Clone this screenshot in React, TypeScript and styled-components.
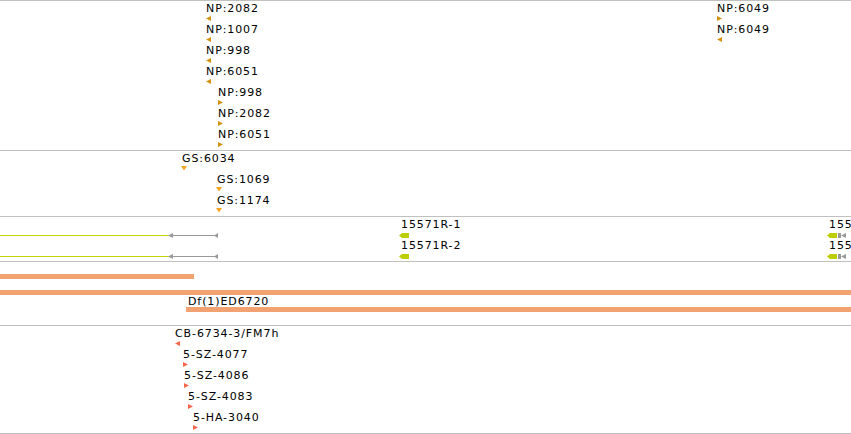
import styled, { createGlobalStyle } from 'styled-components';

const RULE = '#c0c0c0';

const GlobalStyle = createGlobalStyle`
  html, body {
    margin: 0;
    padding: 0;
    background: #fff;
  }
  body {
    font-family: "DejaVu Sans", Verdana, sans-serif;
  }
`;

type Strand = 'left' | 'right' | 'down';

interface Feat {
  x: number;
  label: string;
  strand: Strand;
}

const npRows: Feat[][] = [
  [
    { x: 206, label: 'NP:2082', strand: 'left' },
    { x: 717, label: 'NP:6049', strand: 'right' },
  ],
  [
    { x: 206, label: 'NP:1007', strand: 'left' },
    { x: 717, label: 'NP:6049', strand: 'left' },
  ],
  [{ x: 206, label: 'NP:998', strand: 'left' }],
  [{ x: 206, label: 'NP:6051', strand: 'left' }],
  [{ x: 218, label: 'NP:998', strand: 'right' }],
  [{ x: 218, label: 'NP:2082', strand: 'right' }],
  [{ x: 218, label: 'NP:6051', strand: 'right' }],
];

const gsRows: Feat[][] = [
  [{ x: 182, label: 'GS:6034', strand: 'down' }],
  [{ x: 217, label: 'GS:1069', strand: 'down' }],
  [{ x: 217, label: 'GS:1174', strand: 'down' }],
];

const stockRows: Feat[][] = [
  [{ x: 175, label: 'CB-6734-3/FM7h', strand: 'left' }],
  [{ x: 183, label: '5-SZ-4077', strand: 'right' }],
  [{ x: 184, label: '5-SZ-4086', strand: 'right' }],
  [{ x: 188, label: '5-SZ-4083', strand: 'right' }],
  [{ x: 193, label: '5-HA-3040', strand: 'right' }],
];

const transcripts = [
  { label: '15571R-1', lineColor: '#c4d400' },
  { label: '15571R-2', lineColor: '#c4d400' },
];

const deficiencies = [
  { x: 0, width: 194, label: '' },
  { x: 0, width: 851, label: '' },
  { x: 186, width: 665, label: 'Df(1)ED6720' },
];

const Browser = styled.div`
  width: 851px;
  height: 434px;
  overflow: hidden;
  border-top: 1px solid ${RULE};
  box-sizing: border-box;
  display: flex;
  flex-direction: column;
`;

const Track = styled.section<{ $height: number; $padTop?: number }>`
  position: relative;
  flex: none;
  height: ${(p) => p.$height + 1}px;
  padding-top: ${(p) => p.$padTop ?? 0}px;
  border-bottom: 1px solid ${RULE};
  box-sizing: border-box;
  overflow: hidden;
  display: flex;
  flex-direction: column;
`;

const Row = styled.div<{ $height: number }>`
  position: relative;
  flex: none;
  height: ${(p) => p.$height}px;
`;

const Feature = styled.div`
  position: absolute;
  top: 0;
  display: flex;
  flex-direction: column;
  align-items: flex-start;
`;

const Label = styled.span<{ $top?: number }>`
  display: block;
  height: 12px;
  padding-top: ${(p) => p.$top ?? 2}px;
  font-size: 11px;
  line-height: 12px;
  letter-spacing: 0.9px;
  color: #000;
  white-space: nowrap;
`;

const Glyph = styled.svg<{ $shift?: number }>`
  display: block;
  flex: none;
  margin-top: 1px;
  margin-left: ${(p) => p.$shift ?? 0}px;
`;

const CanvasRow = styled.svg`
  display: block;
  position: absolute;
  left: 0;
  top: 0;
`;

const BarRow = styled.div`
  flex: none;
  height: 16px;
  display: flex;
  flex-direction: column;
`;

const BarLabel = styled.span`
  display: block;
  height: 11px;
  padding-top: 1px;
  padding-left: 2px;
  font-size: 11px;
  line-height: 12px;
  letter-spacing: 0.9px;
  color: #000;
  white-space: nowrap;
`;

const Bar = styled.div<{ $color: string }>`
  flex: none;
  height: 5px;
  background: ${(p) => p.$color};
`;

function StrandGlyph({ strand, color }: { strand: Strand; color: string }) {
  if (strand === 'down') {
    return (
      <Glyph width={6} height={5} $shift={-1}>
        <polygon points="0,0 6,0 3,4.5" fill={color} />
      </Glyph>
    );
  }
  const points = strand === 'left' ? '0,2.5 5,0 5,5' : '0,0 5,2.5 0,5';
  return (
    <Glyph width={5} height={5}>
      <polygon points={points} fill={color} />
    </Glyph>
  );
}

function FeatureTrack({ rows, height, color }: { rows: Feat[][]; height: number; color: string }) {
  return (
    <Track $height={height}>
      {rows.map((row, i) => (
        <Row key={i} $height={21}>
          {row.map((f) => (
            <Feature key={f.label + f.x} style={{ left: f.x }}>
              <Label>{f.label}</Label>
              <StrandGlyph strand={f.strand} color={color} />
            </Feature>
          ))}
        </Row>
      ))}
    </Track>
  );
}

function TranscriptTrack() {
  const green = '#bccd00';
  const grey = '#999999';
  return (
    <Track $height={44}>
      {transcripts.map((t) => (
        <Row key={t.label} $height={21}>
          <CanvasRow width={851} height={21}>
            <line x1={0} y1={18.5} x2={169} y2={18.5} stroke={t.lineColor} strokeWidth={1} />
            <line x1={172} y1={18.5} x2={216} y2={18.5} stroke={grey} strokeWidth={1} />
            <polygon points="168,18.5 173,16 173,21" fill={grey} />
            <polygon points="214,18.5 218,16 218,21" fill={grey} />
            <polygon points="399,18.5 402,16 409,16 409,21 402,21" fill={green} />
            <polygon points="827,18.5 830,16 837,16 837,21 830,21" fill={green} />
            <rect x={838} y={16} width={3} height={5} fill={grey} />
            <polygon points="841,18.5 846,16 846,21" fill={grey} />
          </CanvasRow>
          <Feature style={{ left: 401 }}>
            <Label $top={2}>{t.label}</Label>
          </Feature>
          <Feature style={{ left: 829 }}>
            <Label $top={2}>{t.label}</Label>
          </Feature>
        </Row>
      ))}
    </Track>
  );
}

function DeficiencyTrack() {
  return (
    <Track $height={63} $padTop={1}>
      {deficiencies.map((d, i) => (
        <BarRow key={i} style={{ marginLeft: d.x, width: d.width }}>
          <BarLabel>{d.label}</BarLabel>
          <Bar $color="#f2a271" />
        </BarRow>
      ))}
    </Track>
  );
}

export default function App() {
  return (
    <>
      <GlobalStyle />
      <Browser>
        <FeatureTrack rows={npRows} height={149} color="#d4920c" />
        <FeatureTrack rows={gsRows} height={65} color="#f4a520" />
        <TranscriptTrack />
        <DeficiencyTrack />
        <FeatureTrack rows={stockRows} height={107} color="#f4674a" />
      </Browser>
    </>
  );
}
